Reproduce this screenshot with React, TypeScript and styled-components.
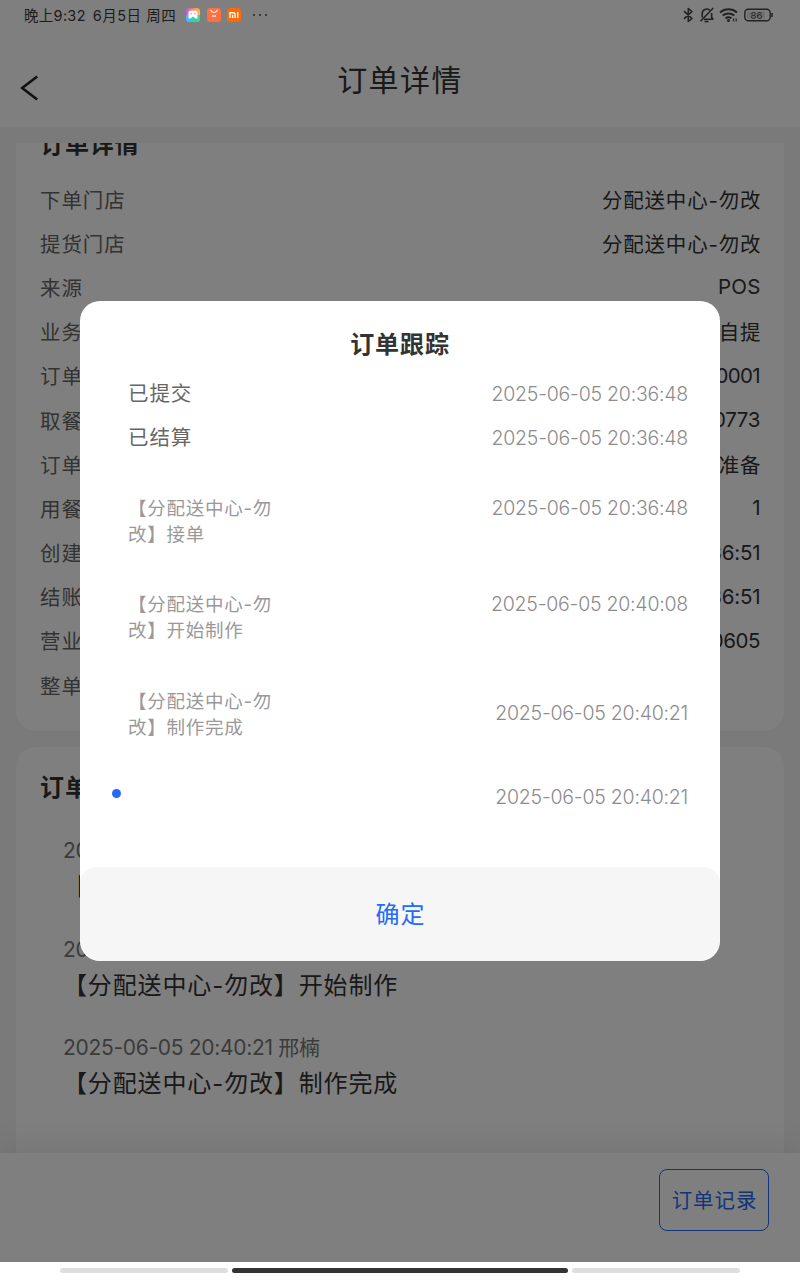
import React from 'react';
import styled, { createGlobalStyle } from 'styled-components';

const GlobalStyle = createGlobalStyle`
  * { box-sizing: border-box; }
  html, body { margin: 0; padding: 0; }
  body {
    width: 800px;
    height: 1280px;
    overflow: hidden;
    background: #fff;
    font-family: Inter, "Noto Sans CJK SC", sans-serif;
    text-spacing-trim: space-all;
  }
`;

const Screen = styled.div`
  position: relative;
  width: 800px;
  height: 1280px;
  display: flex;
  flex-direction: column;
  overflow: hidden;
  background: #fff;
`;

const Page = styled.div`
  height: 1262px;
  flex: none;
  display: flex;
  flex-direction: column;
  overflow: hidden;
  background: #f4f4f4;
`;

const Header = styled.header`
  height: 127px;
  flex: none;
  display: grid;
  grid-template-columns: 60px 1fr 60px;
  padding-top: 34px;
  background: #fff;
`;

const BackButton = styled.div`
  padding: 41px 0 0 20px;
  line-height: 0;
`;

const HeaderTitle = styled.h1`
  margin: 0;
  text-align: center;
  font-size: 30px;
  font-weight: 400;
  line-height: 93px;
  letter-spacing: 1.4px;
  color: #333;
`;

const ScrollArea = styled.main`
  flex: 1;
  min-height: 0;
  margin-top: 16px;
  padding: 0 16px;
  overflow: hidden;
`;

const Card = styled.section<{ $scrolled?: boolean }>`
  height: ${p => (p.$scrolled ? 628 : 480)}px;
  margin-top: ${p => (p.$scrolled ? -40 : 16)}px;
  padding: ${p => (p.$scrolled ? 24 : 23)}px 24px 0;
  border-radius: 20px;
  background: #fff;
`;

const CardTitle = styled.h2`
  margin: 0;
  height: 49.5px;
  font-size: 24px;
  font-weight: 700;
  line-height: 36px;
  letter-spacing: 0.9px;
  color: #333;
`;

const DetailRow = styled.div`
  display: flex;
  justify-content: space-between;
  align-items: center;
  height: 44.2px;
  font-size: 20.5px;
  letter-spacing: 0.9px;
  color: #666;
`;

const DetailValue = styled.span<{ $spacing?: number }>`
  color: #333;
  margin-right: ${p => -(p.$spacing ?? 0.8) - 0.5}px;
  letter-spacing: ${p => p.$spacing ?? 0.8}px;
`;

const LogEntry = styled.div`
  height: 98.7px;
  padding-left: 23px;
`;

const LogList = styled.div`
  padding-top: 13.5px;
`;

const LogTime = styled.div`
  font-size: 21px;
  line-height: 36px;
  letter-spacing: -0.3px;
  color: #777;
`;

const LogText = styled.div`
  font-size: 24px;
  line-height: 36px;
  letter-spacing: 0.87px;
  color: #333;
`;

const BottomBar = styled.footer`
  position: relative;
  height: 109px;
  flex: none;
  display: flex;
  justify-content: flex-end;
  padding: 16px 31px 0 0;
  background: #fff;
  box-shadow: 0 -4px 32px rgba(30, 50, 40, 0.12);
`;

const OutlineButton = styled.button`
  width: 110px;
  height: 62px;
  padding: 0 0 2px 1px;
  border: 1.5px solid #246bf5;
  border-radius: 8px;
  background: #fff;
  color: #246bf5;
  font: inherit;
  font-size: 20.5px;
  letter-spacing: 0.9px;
`;

const Overlay = styled.div`
  position: absolute;
  inset: 0 0 18px;
  display: flex;
  justify-content: center;
  align-items: center;
  background: rgba(0, 0, 0, 0.5);
`;

const Dialog = styled.div`
  width: 640px;
  height: 660px;
  display: flex;
  flex-direction: column;
  border-radius: 20px;
  background: #fff;
  overflow: hidden;
`;

const DialogTitle = styled.h2`
  margin: 0;
  padding-top: 25.5px;
  height: 70.5px;
  text-align: center;
  font-size: 24px;
  font-weight: 700;
  line-height: 36px;
  letter-spacing: 0.9px;
  color: #333;
`;

const TrackList = styled.div`
  flex: 1;
  min-height: 0;
  padding: 0 32px 0 48px;
`;

const TrackRow = styled.div<{ $height: number }>`
  display: flex;
  justify-content: space-between;
  height: ${p => p.$height}px;
`;

const TrackState = styled.div`
  font-size: 20.5px;
  line-height: 44px;
  letter-spacing: 0.9px;
  color: #666;
`;

const TrackNote = styled.div`
  font-size: 18.5px;
  line-height: 26.2px;
  letter-spacing: 0.75px;
  color: #999;
  white-space: pre;
`;

const TrackTime = styled.time<{ $line: number; $drop?: number }>`
  font-size: 19.5px;
  font-weight: 300;
  line-height: ${p => p.$line}px;
  padding-top: ${p => p.$drop ?? 0}px;
  letter-spacing: -0.23px;
  color: #8c8c8c;
`;

const CurrentDot = styled.span`
  width: 9px;
  height: 9px;
  margin: 5px 0 0 -16.5px;
  border-radius: 50%;
  background: #246bf5;
`;

const ConfirmButton = styled.button`
  height: 94px;
  flex: none;
  padding: 0 0 3px 1px;
  border: 0;
  border-radius: 16px 16px 22px 22px;
  background: #f6f6f6;
  color: #246bf5;
  font: inherit;
  font-size: 24px;
  letter-spacing: 1px;
`;

const StatusBar = styled.div`
  position: absolute;
  inset: 0 0 auto;
  height: 30px;
  display: flex;
  align-items: center;
  justify-content: space-between;
  padding: 0 26px 0 24px;
  color: #1c1c1c;
  font-size: 14.5px;
  font-weight: 400;
`;

const StatusGroup = styled.div<{ $gap: number }>`
  display: flex;
  align-items: center;
  gap: ${p => p.$gap}px;
`;

const StatusText = styled.span<{ $spacing?: number }>`
  margin-top: -2px;
  letter-spacing: ${p => p.$spacing ?? 0}px;
  white-space: pre;
`;

const AppIcons = styled(StatusGroup)`
  margin-left: 3px;
`;

const MoreDots = styled.span`
  display: flex;
  gap: 3.7px;
  margin-left: 5px;

  i {
    width: 2px;
    height: 2px;
    border-radius: 50%;
    background: #222;
  }
`;

const NavBar = styled.div`
  height: 18px;
  display: flex;
  gap: 4px;
  padding: 6px 60px 0;
  background: #fff;
`;

const NavPill = styled.span<{ $active?: boolean }>`
  flex: ${p => (p.$active ? 2 : 1)} 0 0;
  height: 5px;
  border-radius: 3px;
  background: ${p => (p.$active ? '#333' : '#dedede')};
`;

const details = [
  { label: '下单门店', value: '分配送中心-勿改' },
  { label: '提货门店', value: '分配送中心-勿改' },
  { label: '来源', value: 'POS', spacing: 0.3 },
  { label: '业务类型', value: '自提' },
  { label: '订单编号', value: '0001', spacing: -0.7 },
  { label: '取餐号', value: '0773', spacing: -0.3 },
  { label: '订单状态', value: '准备' },
  { label: '用餐人数', value: '1', spacing: 0 },
  { label: '创建时间', value: '20:36:51', spacing: -0.2 },
  { label: '结账时间', value: '20:36:51', spacing: -0.2 },
  { label: '营业日期', value: '20250605', spacing: -0.4 },
  { label: '整单备注', value: '' },
];

const logs = [
  { time: '2025-06-05 20:36:48', text: '【分配送中心-勿改】接单' },
  { time: '2025-06-05 20:40:08', text: '【分配送中心-勿改】开始制作' },
  { time: '2025-06-05 20:40:21 邢楠', text: '【分配送中心-勿改】制作完成' },
];

const RainbowAppIcon = () => (
  <svg width="14" height="14" viewBox="0 0 14 14">
    <defs>
      <linearGradient id="rainbow" x1="0" y1="0" x2="1" y2="0">
        <stop offset="0" stopColor="#b067e8" />
        <stop offset="0.4" stopColor="#ff6f7c" />
        <stop offset="1" stopColor="#ffc13a" />
      </linearGradient>
    </defs>
    <rect width="14" height="14" rx="3.5" fill="url(#rainbow)" />
    <path d="M0 7h14v3.5a3.5 3.5 0 0 1-3.5 3.5h-7A3.5 3.5 0 0 1 0 10.5z" fill="#46bdf0" />
    <path d="M8 7h6v3.5a3.5 3.5 0 0 1-3.5 3.5H5z" fill="#38d3a4" />
    <path d="M5 2.5h4a2.5 2.5 0 0 1 2.5 2.5v5.5L9.5 10.5 7 8.5 4.500 10.500h-2V5A2.500 2.500 0 0 1 5 2.500z" fill="#fff" />
    <circle cx="5.2" cy="5.8" r="0.8" fill="#f58a78" />
    <circle cx="8.8" cy="5.8" r="0.8" fill="#f58a78" />
  </svg>
);

const ShopAppIcon = () => (
  <svg width="14" height="14" viewBox="0 0 14 14">
    <rect width="14" height="14" rx="3" fill="#fb7142" />
    <path d="M3.5 1.800Q4.500 4.500 7 4.500t3.500-2.700" fill="none" stroke="#ffe7dc" strokeWidth="1.1" />
    <path d="M5 8h4" stroke="#ffe7dc" strokeWidth="1.5" />
  </svg>
);

const MiAppIcon = () => (
  <svg width="14" height="14" viewBox="0 0 14 14">
    <rect width="14" height="14" rx="3.5" fill="#fb6a04" />
    <path d="M3 10V4.700h3.200q1.900 0 1.900 1.900V10M5.550 6.700V10M10.700 4V10" fill="none" stroke="#fff" strokeWidth="1.4" />
  </svg>
);

const BluetoothIcon = () => (
  <svg width="11" height="16" viewBox="0 0 11 16" fill="none" stroke="#222" strokeWidth="1.6">
    <path d="M1 4.200l8 7.300-3.700 3V1.500l3.700 3-8 7.300" strokeLinejoin="round" />
  </svg>
);

const MutedBellIcon = () => (
  <svg width="16" height="16" viewBox="0 0 16 16" fill="none" stroke="#222" strokeWidth="1.6">
    <path d="M5 12.200h9.500M3.200 10.500V6.500a4.600 4.600 0 0 1 7.500-3.400M12.600 6v4.200l1.400 2" />
    <path d="M14.200 1L1.500 14.300" />
    <path d="M5.500 14.500h4" />
  </svg>
);

const WifiIcon = () => (
  <svg width="20" height="16" viewBox="0 0 20 16" fill="none" stroke="#222" strokeWidth="2">
    <path d="M1 5.400a13 13 0 0 1 17 0" />
    <path d="M3.700 8.500a9 9 0 0 1 11.600 0" />
    <path d="M6.500 11.400a5 5 0 0 1 6-.2" />
    <circle cx="9.500" cy="13.500" r="1.500" fill="#222" stroke="none" />
    <path d="M14.500 11.500v3M17.200 11.500v3" strokeWidth="1.2" />
  </svg>
);

const BatteryIcon = () => (
  <svg width="30" height="14" viewBox="0 0 30 14">
    <rect x="0.8" y="1.300" width="25.400" height="11.400" rx="3.500" fill="none" stroke="#222" strokeWidth="1.4" />
    <rect x="3" y="3.500" width="18" height="7" rx="1" fill="#222" opacity="0.15" />
    <path d="M28 5v4" stroke="#222" strokeWidth="1.5" />
    <text x="12.500" y="10.500" textAnchor="middle" fontFamily="Inter, sans-serif" fontSize="9.500" fontWeight="400" fill="#222">86</text>
  </svg>
);

export default function App() {
  return (
    <Screen>
      <GlobalStyle />
      <Page>
        <Header>
          <BackButton>
            <svg width="20" height="26" viewBox="0 0 20 26" fill="none" stroke="#222" strokeWidth="2.6">
              <path d="M17.200 1.500L2.200 13l15 11.500" />
            </svg>
          </BackButton>
          <HeaderTitle>订单详情</HeaderTitle>
        </Header>
        <ScrollArea>
          <Card $scrolled>
            <CardTitle>订单详情</CardTitle>
            {details.map(d => (
              <DetailRow key={d.label}>
                <span>{d.label}</span>
                <DetailValue $spacing={d.spacing}>{d.value}</DetailValue>
              </DetailRow>
            ))}
          </Card>
          <Card>
            <CardTitle>订单记录</CardTitle>
            <LogList>
              {logs.map(log => (
                <LogEntry key={log.time}>
                  <LogTime>{log.time}</LogTime>
                  <LogText>{log.text}</LogText>
                </LogEntry>
              ))}
            </LogList>
          </Card>
        </ScrollArea>
        <BottomBar>
          <OutlineButton>订单记录</OutlineButton>
        </BottomBar>
      </Page>
      <NavBar>
        <NavPill />
        <NavPill $active />
        <NavPill />
      </NavBar>
      <Overlay>
        <Dialog>
          <DialogTitle>订单跟踪</DialogTitle>
          <TrackList>
            <TrackRow $height={44}>
              <TrackState>已提交</TrackState>
              <TrackTime $line={44}>2025-06-05 20:36:48</TrackTime>
            </TrackRow>
            <TrackRow $height={79}>
              <TrackState>已结算</TrackState>
              <TrackTime $line={44}>2025-06-05 20:36:48</TrackTime>
            </TrackRow>
            <TrackRow $height={96.5}>
              <TrackNote>{'【分配送中心-勿\n改】接单'}</TrackNote>
              <TrackTime $line={26}>2025-06-05 20:36:48</TrackTime>
            </TrackRow>
            <TrackRow $height={96.5}>
              <TrackNote>{'【分配送中心-勿\n改】开始制作'}</TrackNote>
              <TrackTime $line={26}>2025-06-05 20:40:08</TrackTime>
            </TrackRow>
            <TrackRow $height={96}>
              <TrackNote>{'【分配送中心-勿\n改】制作完成'}</TrackNote>
              <TrackTime $line={26} $drop={12}>2025-06-05 20:40:21</TrackTime>
            </TrackRow>
            <TrackRow $height={60}>
              <CurrentDot />
              <TrackTime $line={26}>2025-06-05 20:40:21</TrackTime>
            </TrackRow>
          </TrackList>
          <ConfirmButton>确定</ConfirmButton>
        </Dialog>
      </Overlay>
      <StatusBar>
        <StatusGroup $gap={7}>
          <StatusText $spacing={0.3}>晚上9:32</StatusText>
          <StatusText $spacing={0.5}>6月5日 周四</StatusText>
          <AppIcons $gap={6.5}>
            <RainbowAppIcon />
            <ShopAppIcon />
            <MiAppIcon />
          </AppIcons>
          <MoreDots><i /><i /><i /></MoreDots>
        </StatusGroup>
        <StatusGroup $gap={4.7}>
          <BluetoothIcon />
          <MutedBellIcon />
          <WifiIcon />
          <BatteryIcon />
        </StatusGroup>
      </StatusBar>
    </Screen>
  );
}
